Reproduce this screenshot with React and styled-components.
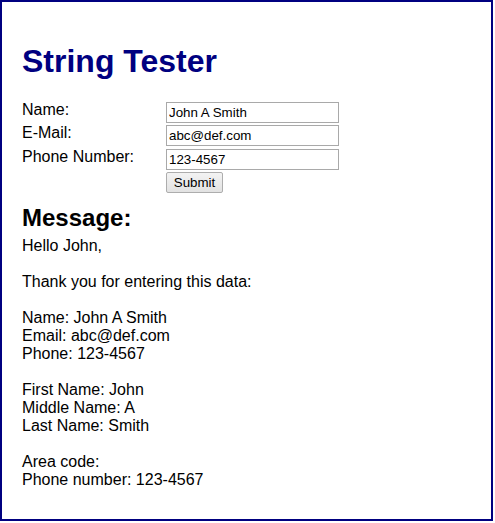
import React from "react";
import styled, { createGlobalStyle } from "styled-components";

const GlobalStyle = createGlobalStyle`
  body {
    margin: 0;
    background: #fff;
    font-family: "Liberation Sans", Arial, sans-serif;
  }
`;

const Page = styled.div`
  box-sizing: border-box;
  width: 493px;
  height: 521px;
  border: 2px solid #000080;
  padding: 41px 20px 0 20px;
  color: #000;
  font-size: 16px;
`;

const Title = styled.h1`
  margin: 0 0 22px;
  font-size: 32px;
  line-height: 37px;
  font-weight: bold;
  color: #000080;
`;

const Form = styled.form`
  display: grid;
  grid-template-columns: 144px 173px;
  row-gap: 2.4px;
  align-items: start;
`;

const Label = styled.label`
  line-height: 18px;
  margin-top: -1px;
`;

const Input = styled.input`
  box-sizing: border-box;
  width: 173px;
  height: 21px;
  margin: 0;
  padding: 1px 2px;
  border: 1px solid #a9a9a9;
  font-family: "Liberation Sans", Arial, sans-serif;
  font-size: 13.33px;
  color: #000;
  outline: none;
`;

const Button = styled.button`
  grid-column: 2;
  justify-self: start;
  box-sizing: border-box;
  width: 57px;
  height: 21px;
  margin: 0;
  padding: 0;
  border: 1px solid #adadad;
  border-radius: 2px;
  background: linear-gradient(#f3f3f3, #e2e2e2);
  font-family: "Liberation Sans", Arial, sans-serif;
  font-size: 13.33px;
  color: #000;
`;

const Heading = styled.h2`
  margin: 11px 0 5px;
  font-size: 24px;
  line-height: 28px;
  font-weight: bold;
`;

const Message = styled.div`
  line-height: 18px;
  white-space: pre-line;
`;

const fields = [
  { name: "name", label: "Name:", value: "John A Smith" },
  { name: "email", label: "E-Mail:", value: "abc@def.com" },
  { name: "phone", label: "Phone Number:", value: "123-4567" },
];

const message = `Hello John,

Thank you for entering this data:

Name: John A Smith
Email: abc@def.com
Phone: 123-4567

First Name: John
Middle Name: A
Last Name: Smith

Area code:
Phone number: 123-4567`;

const App = () => {
  return (
    <>
      <GlobalStyle />
      <Page>
        <Title>String Tester</Title>
        <Form onSubmit={(e) => e.preventDefault()}>
          {fields.map((f) => (
            <React.Fragment key={f.name}>
              <Label htmlFor={f.name}>{f.label}</Label>
              <Input id={f.name} name={f.name} defaultValue={f.value} />
            </React.Fragment>
          ))}
          <Button type="submit">Submit</Button>
        </Form>
        <Heading>Message:</Heading>
        <Message>{message}</Message>
      </Page>
    </>
  );
};

export default App;
